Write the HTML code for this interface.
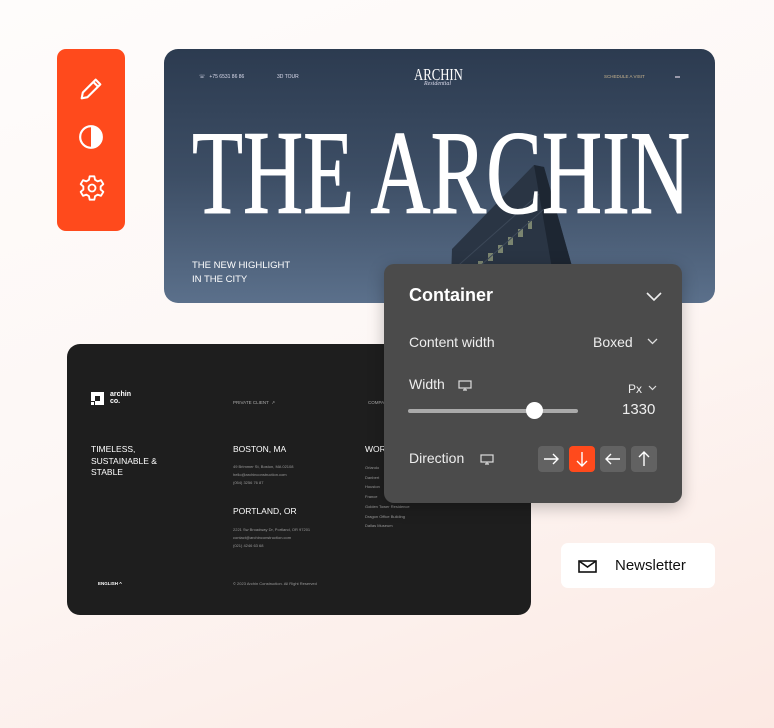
<!DOCTYPE html>
<html><head><meta charset="utf-8"><style>
*{margin:0;padding:0;box-sizing:border-box}
body{width:774px;height:728px;overflow:hidden;font-family:"Liberation Sans",sans-serif;background:linear-gradient(160deg,#fefcfb 0%,#fdf7f5 50%,#fce9e3 100%);position:relative}
.abs{position:absolute}
.tool{left:57px;top:49px;width:68px;height:182px;background:#ff4a1c;border-radius:9px}
.hero{left:164px;top:49px;width:551px;height:254px;border-radius:14px;overflow:hidden;background:linear-gradient(180deg,#2c3b50 0%,#3d4e65 50%,#5b708b 100%)}
.foot{left:67px;top:344px;width:464px;height:271px;border-radius:13px;background:#1e1e1e;color:#fff}
.panel{left:384px;top:264px;width:298px;height:239px;border-radius:10px;background:#4b4b4b;color:#eee;box-shadow:0 4px 16px rgba(0,0,0,.25)}
.news{left:561px;top:543px;width:154px;height:45px;background:#fff;border-radius:7px}
.t{position:absolute;white-space:nowrap}
.sm{font-size:4px;color:#9a9a9a}
.btn{position:absolute;top:182px;width:26px;height:26px;border-radius:4px;background:#626262}
</style></head><body>
<div class="abs tool">
<svg class="abs" style="left:20px;top:26px" width="28" height="28" viewBox="0 0 24 24" fill="none" stroke="#fff" stroke-width="1.8" stroke-linejoin="round"><path d="M4 20l1-5L16 4l4 4L9 19z M14 6l4 4"/></svg>
<svg class="abs" style="left:21px;top:75px" width="26" height="26" viewBox="0 0 24 24"><circle cx="12" cy="12" r="10" fill="none" stroke="#fff" stroke-width="2"/><path d="M12 2a10 10 0 0 1 0 20z" fill="#fff"/></svg>
<svg class="abs" style="left:21px;top:125px" width="28" height="28" viewBox="0 0 24 24" fill="none" stroke="#fff" stroke-width="1.6" stroke-linejoin="round"><path d="M10 2h4l.6 3 2.2 1.3 2.9-1 2 3.4-2.3 2v2.6l2.3 2-2 3.4-2.9-1L14.6 19 14 22h-4l-.6-3-2.2-1.3-2.9 1-2-3.4 2.3-2v-2.6l-2.3-2 2-3.4 2.9 1L9.4 5z"/><circle cx="12" cy="12" r="3"/></svg>
</div>
<div class="abs hero">
<svg class="abs" style="left:280px;top:110px" width="160" height="150" viewBox="0 0 160 150"><path d="M6 150L8 90 90 6 100 8 140 150z" fill="#2a3544"/><path d="M90 6l10 2 40 142h-25z" fill="#1d2632"/><g fill="#8a9478" opacity=".85"><rect x="14" y="118" width="5" height="8"/><rect x="24" y="110" width="5" height="8"/><rect x="34" y="102" width="5" height="8"/><rect x="44" y="94" width="5" height="8"/><rect x="54" y="86" width="5" height="8"/><rect x="64" y="78" width="5" height="8"/><rect x="74" y="70" width="5" height="8"/><rect x="84" y="62" width="4" height="8"/></g><g stroke="#3c4858" stroke-width="1"><path d="M8 132L100 50M8 112L95 35"/></g></svg>
<div class="t" style="left:35px;top:25px;font-size:5px;color:#dde">☏ &nbsp;&nbsp;+75 6531 86 86</div>
<div class="t" style="left:113px;top:25px;font-size:5px;color:#dde">3D TOUR</div>
<div class="t" style="left:250px;top:16px;font-family:'Liberation Serif',serif;font-size:17px;color:#fff;transform:scaleX(.75);transform-origin:left">ARCHIN</div>
<div class="t" style="left:260px;top:32px;font-family:'Liberation Serif',serif;font-style:italic;font-size:6px;color:#dde">Residential</div>
<div class="t" style="left:440px;top:25px;font-size:4.5px;color:#c9b48e">SCHEDULE A VISIT</div>
<div class="abs" style="left:511px;top:27px;width:5px;height:2px;background:#99a"></div>
<div class="t" style="left:28px;top:64px;font-family:'Liberation Serif',serif;font-size:120px;line-height:120px;color:#fff;transform:scaleX(.695);transform-origin:left;-webkit-text-stroke:1px #fff">THE ARCHIN</div>
<div class="t" style="left:28px;top:210px;font-size:9.5px;line-height:14px;color:#fff">THE NEW HIGHLIGHT<br>IN THE CITY</div>
</div>
<div class="abs foot">
<svg class="abs" style="left:24px;top:48px" width="13" height="13" viewBox="0 0 13 13"><path d="M0 0h13v13H4V9h5V4H4v5H0z" fill="#fff"/><rect x="0" y="10" width="3" height="3" fill="#fff"/></svg>
<div class="t" style="left:43px;top:47px;font-size:7px;line-height:7px;font-weight:bold">archin<br>co.</div>
<div class="t" style="left:166px;top:56px;font-size:4.5px;color:#aaa">PRIVATE CLIENT &nbsp;↗</div>
<div class="t" style="left:301px;top:56px;font-size:4.5px;color:#aaa">COMPANY</div>
<div class="t" style="left:24px;top:100px;font-size:8.5px;line-height:11.5px">TIMELESS,<br>SUSTAINABLE &amp;<br>STABLE</div>
<div class="t" style="left:166px;top:100px;font-size:8.5px">BOSTON, MA</div>
<div class="t sm" style="left:166px;top:119px;line-height:8px">49 Brimmer St, Boston, MA 02108<br>hello@archinconstruction.com<br>(054) 3256 76 87</div>
<div class="t" style="left:166px;top:162px;font-size:8.5px">PORTLAND, OR</div>
<div class="t sm" style="left:166px;top:182px;line-height:8px">2221 Sw Broadway Dr, Portland, OR 97201<br>contact@archinconstruction.com<br>(021) 4246 63 68</div>
<div class="t" style="left:298px;top:100px;font-size:8.5px">WORKS</div>
<div class="t sm" style="left:298px;top:119px;line-height:9.7px">Orlando<br>Danbert<br>Houston<br>France<br>Golden Tower Residence<br>Dragon Office Building<br>Dallas Museum</div>
<div class="t" style="left:31px;top:237px;font-size:4.5px;font-weight:bold">ENGLISH ^</div>
<div class="t sm" style="left:166px;top:237px">© 2023 Archin Construction. All Right Reserved</div>
</div>
<div class="abs panel">
<div class="t" style="left:25px;top:21px;font-size:18px;font-weight:bold;color:#fff">Container</div>
<svg class="abs" style="left:262px;top:28px" width="16" height="10" viewBox="0 0 16 10" fill="none" stroke="#eee" stroke-width="1.6"><path d="M1 1l7 7 7-7"/></svg>
<div class="t" style="left:25px;top:70px;font-size:14px">Content width</div>
<div class="t" style="left:209px;top:70px;font-size:14px">Boxed</div>
<svg class="abs" style="left:263px;top:74px" width="11" height="7" viewBox="0 0 11 7" fill="none" stroke="#ddd" stroke-width="1.3"><path d="M1 1l4.5 4.5L10 1"/></svg>
<div class="t" style="left:25px;top:112px;font-size:14px">Width</div>
<svg class="abs" style="left:74px;top:116px" width="14" height="11" viewBox="0 0 14 11" fill="none" stroke="#ddd" stroke-width="1.2"><rect x="1" y="1" width="12" height="7"/><path d="M5 10h4M7 8v2"/></svg>
<div class="t" style="left:244px;top:118px;font-size:12px">Px</div>
<svg class="abs" style="left:264px;top:121px" width="9" height="6" viewBox="0 0 9 6" fill="none" stroke="#ddd" stroke-width="1.2"><path d="M1 1l3.5 3.5L8 1"/></svg>
<div class="abs" style="left:24px;top:145px;width:170px;height:4px;border-radius:2px;background:#aaa"></div>
<div class="abs" style="left:142px;top:138px;width:17px;height:17px;border-radius:50%;background:#fff"></div>
<div class="t" style="left:238px;top:137px;font-size:15px">1330</div>
<div class="t" style="left:25px;top:186px;font-size:14px">Direction</div>
<svg class="abs" style="left:96px;top:190px" width="14" height="11" viewBox="0 0 14 11" fill="none" stroke="#ddd" stroke-width="1.2"><rect x="1" y="1" width="12" height="7"/><path d="M5 10h4M7 8v2"/></svg>
<div class="btn" style="left:154px"><svg width="26" height="26" viewBox="0 0 26 26" fill="none" stroke="#fff" stroke-width="1.4"><path d="M6 13h14M15 8l5 5-5 5"/></svg></div>
<div class="btn" style="left:185px;background:#ff4a1c"><svg width="26" height="26" viewBox="0 0 26 26" fill="none" stroke="#fff" stroke-width="1.4"><path d="M13 6v14M8 15l5 5 5-5"/></svg></div>
<div class="btn" style="left:216px"><svg width="26" height="26" viewBox="0 0 26 26" fill="none" stroke="#fff" stroke-width="1.4"><path d="M20 13H6M11 8l-5 5 5 5"/></svg></div>
<div class="btn" style="left:247px"><svg width="26" height="26" viewBox="0 0 26 26" fill="none" stroke="#fff" stroke-width="1.4"><path d="M13 20V6M8 11l5-5 5 5"/></svg></div>
</div>
<div class="abs news">
<svg class="abs" style="left:17px;top:17px" width="19" height="13" viewBox="0 0 19 13" fill="none" stroke="#111" stroke-width="1.6"><rect x="1" y="1" width="17" height="11"/><path d="M1 1l8.5 6L18 1"/></svg>
<div class="t" style="left:54px;top:14px;font-size:15px;color:#111">Newsletter</div>
</div>
</body></html>
